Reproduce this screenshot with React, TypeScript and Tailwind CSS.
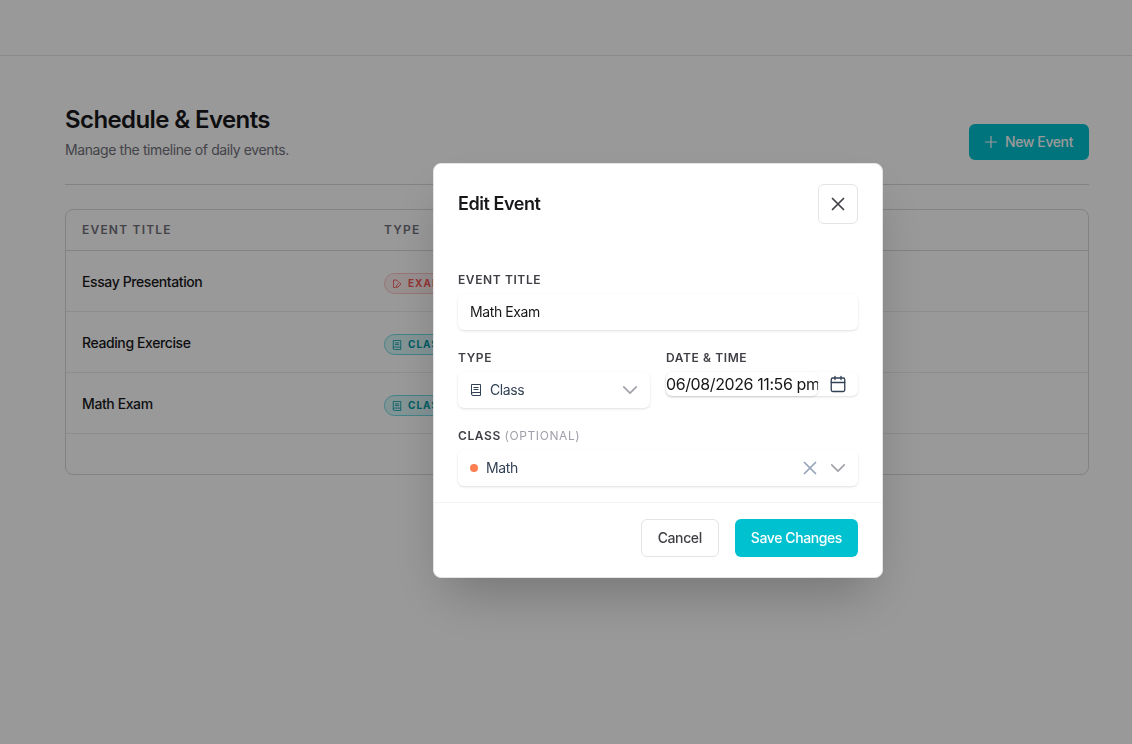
import React, { useState } from "react";
import { Calendar } from "lucide-react";

const events = [
  { id: 1, title: "Essay Presentation", type: "Exam" },
  { id: 2, title: "Reading Exercise", type: "Class" },
  { id: 3, title: "Math Exam", type: "Class" },
];

const labelStyle = "text-xs font-semibold uppercase tracking-wider text-[#3f3f46]";
const fieldStyle = "flex h-9 items-center rounded-md bg-white pl-3 pr-2.5 shadow-sm";

const ClassIcon = ({ className }: { className: string }) => (
  <svg className={className} viewBox="0 0 12 12" fill="none" stroke="currentColor">
    <path d="M1.5 10V.5h9v11H3A1.5 1.5 0 0 1 3 8.5H10.5M3.5 3.5h5M3.5 5.5h5" />
  </svg>
);

const ExamIcon = () => (
  <svg className="size-2.5" viewBox="0 0 10 10" fill="none" stroke="currentColor" strokeWidth={0.9}>
    <path d="M3.5 8.5h-2v-7.500h3l2 2M4 8.500l.5-2 3-3 1.500 1.500-3 3z" />
  </svg>
);

const CrossIcon = ({ className }: { className: string }) => (
  <svg className={className} viewBox="0 0 20 20" fill="none" stroke="currentColor" strokeLinecap="round">
    <path d="M4.5 4.5l11 11M15.5 4.5l-11 11" />
  </svg>
);

const ChevronIcon = () => (
  <svg
    className="pointer-events-none size-5 shrink-0 text-[#a1a1aa]"
    viewBox="0 0 24 24"
    fill="none"
    stroke="currentColor"
    strokeWidth={2}
    strokeLinecap="round"
    strokeLinejoin="round"
  >
    <path d="M19.5 8.25l-7.5 7.5-7.5-7.5" />
  </svg>
);

const TypeBadge = ({ type }: { type: string }) => {
  const color =
    type === "Exam"
      ? "border-[#ffc2c2] bg-[#fdf0f0] text-[#f7585b]"
      : "border-[#6fd9e2] bg-[#dbf7f9] text-[#009aa6]";
  return (
    <span
      className={`inline-flex h-[21px] items-center gap-1.5 rounded-full border px-[7px] text-[10px] font-bold uppercase tracking-widest ${color}`}
    >
      {type === "Exam" ? <ExamIcon /> : <ClassIcon className="size-2.5" />}
      {type}
    </span>
  );
};

const EventsPage = () => (
  <div className="min-h-screen bg-white">
    <header className="h-14 border-b border-[#e4e4e7]" />
    <main className="pl-[65px] pr-[43px] pt-12">
      <div className="flex items-end justify-between border-b border-[#d9d9dc] pb-6">
        <div>
          <h1 className="text-2xl font-semibold tracking-tight text-[#18181b]">Schedule & Events</h1>
          <p className="mt-1 text-sm text-[#71717b]">Manage the timeline of daily events.</p>
        </div>
        <button className="flex h-9 items-center gap-2 rounded-md bg-[#00c1d0] px-4 text-sm font-medium text-white">
          <svg className="size-3" viewBox="0 0 12 12" fill="none" stroke="currentColor" strokeWidth={1.2}>
            <path d="M6 0v12M0 6h12" />
          </svg>
          New Event
        </button>
      </div>
      <div className="mt-6 overflow-hidden rounded-lg border border-[#d9d9dc]">
        <table className="w-full table-fixed text-left">
          <thead>
            <tr className="h-10 border-b border-[#d9d9dc] text-xs uppercase tracking-widest text-[#71717b]">
              <th className="w-[302px] px-4 font-semibold">Event Title</th>
              <th className="px-4 font-semibold">Type</th>
            </tr>
          </thead>
          <tbody>
            {events.map((event) => (
              <tr key={event.id} className="h-[61px] border-b border-[#ececee]">
                <td className="px-4 pt-0.5 text-sm font-medium text-[#18181b]">{event.title}</td>
                <td className="px-4 pt-1">
                  <TypeBadge type={event.type} />
                </td>
              </tr>
            ))}
          </tbody>
        </table>
        <div className="h-10" />
      </div>
    </main>
  </div>
);

const EditEventModal = () => {
  const [title, setTitle] = useState("Math Exam");
  const [type, setType] = useState("Class");
  const [date, setDate] = useState("06/08/2026 11:56 pm");
  const [room, setRoom] = useState("Math");

  return (
    <div
      role="dialog"
      aria-labelledby="modal-title"
      className="w-full max-w-[450px] rounded-lg border border-[#e4e4e7] bg-white shadow-2xl"
    >
      <div className="flex items-center justify-between px-6 py-5">
        <h2 id="modal-title" className="text-lg font-semibold tracking-tight text-[#18181b]">
          Edit Event
        </h2>
        <button
          aria-label="Close"
          className="flex size-10 items-center justify-center rounded-md border border-[#e4e4e7] text-[#3f3f46]"
        >
          <CrossIcon className="size-5 stroke-[1.7]" />
        </button>
      </div>

      <form className="flex flex-col gap-5 px-6 pb-4 pt-7">
        <div className="flex flex-col gap-1.5">
          <label htmlFor="title" className={labelStyle}>
            Event Title
          </label>
          <input
            id="title"
            className="h-9 rounded-md bg-white px-3 pb-0.5 text-sm text-[#18181b] shadow-sm outline-none"
            value={title}
            onChange={(e) => setTitle(e.target.value)}
          />
        </div>

        <div className="grid grid-cols-2 items-start gap-4">
          <div className="flex flex-col gap-1.5">
            <label htmlFor="type" className={labelStyle}>
              Type
            </label>
            <div className={fieldStyle}>
              <ClassIcon className="size-3 shrink-0 text-[#334155]" />
              <select
                id="type"
                className="ml-2 min-w-0 flex-1 appearance-none text-sm text-[#334155] outline-none"
                value={type}
                onChange={(e) => setType(e.target.value)}
              >
                <option>Class</option>
                <option>Exam</option>
              </select>
              <ChevronIcon />
            </div>
          </div>

          <div className="flex flex-col gap-1.5">
            <label htmlFor="date" className={labelStyle}>
              Date & Time
            </label>
            <div className="flex h-6 rounded-md bg-white shadow-sm">
              <input
                id="date"
                className="min-w-0 flex-1 rounded-md text-base text-[#18181b] shadow-sm outline-none"
                value={date}
                onChange={(e) => setDate(e.target.value)}
              />
              <button
                type="button"
                aria-label="Pick a date"
                className="flex w-10 items-center justify-center text-[#334155]"
              >
                <Calendar size={18} strokeWidth={1.75} />
              </button>
            </div>
          </div>
        </div>

        <div className="flex flex-col gap-1.5">
          <label htmlFor="class" className={labelStyle}>
            Class <span className="font-normal text-[#9f9fa9]">(Optional)</span>
          </label>
          <div className={fieldStyle}>
            <span className="size-2 shrink-0 rounded-full bg-[#ff7f50]" />
            <select
              id="class"
              className="ml-2 min-w-0 flex-1 appearance-none text-sm text-[#334155] outline-none"
              value={room}
              onChange={(e) => setRoom(e.target.value)}
            >
              <option value="" />
              <option>Math</option>
            </select>
            <button type="button" aria-label="Clear class" className="mr-2 text-[#94a3b8]" onClick={() => setRoom("")}>
              <CrossIcon className="size-5 stroke-[1.7]" />
            </button>
            <ChevronIcon />
          </div>
        </div>
      </form>

      <div className="flex justify-end gap-4 border-t border-[#f4f4f5] px-6 pb-5 pt-4">
        <button className="h-[38px] rounded-md border border-[#e4e4e7] px-4 text-sm font-medium text-[#3f3f46]">
          Cancel
        </button>
        <button className="h-[38px] rounded-md bg-[#00c1d0] px-4 text-sm font-medium text-white">Save Changes</button>
      </div>
    </div>
  );
};

export default function App() {
  return (
    <div className="font-['Inter',sans-serif] tracking-tight">
      <EventsPage />
      <div className="fixed inset-0 flex items-center justify-center bg-black/40 pb-[3px] pl-[184px]">
        <EditEventModal />
      </div>
    </div>
  );
}
